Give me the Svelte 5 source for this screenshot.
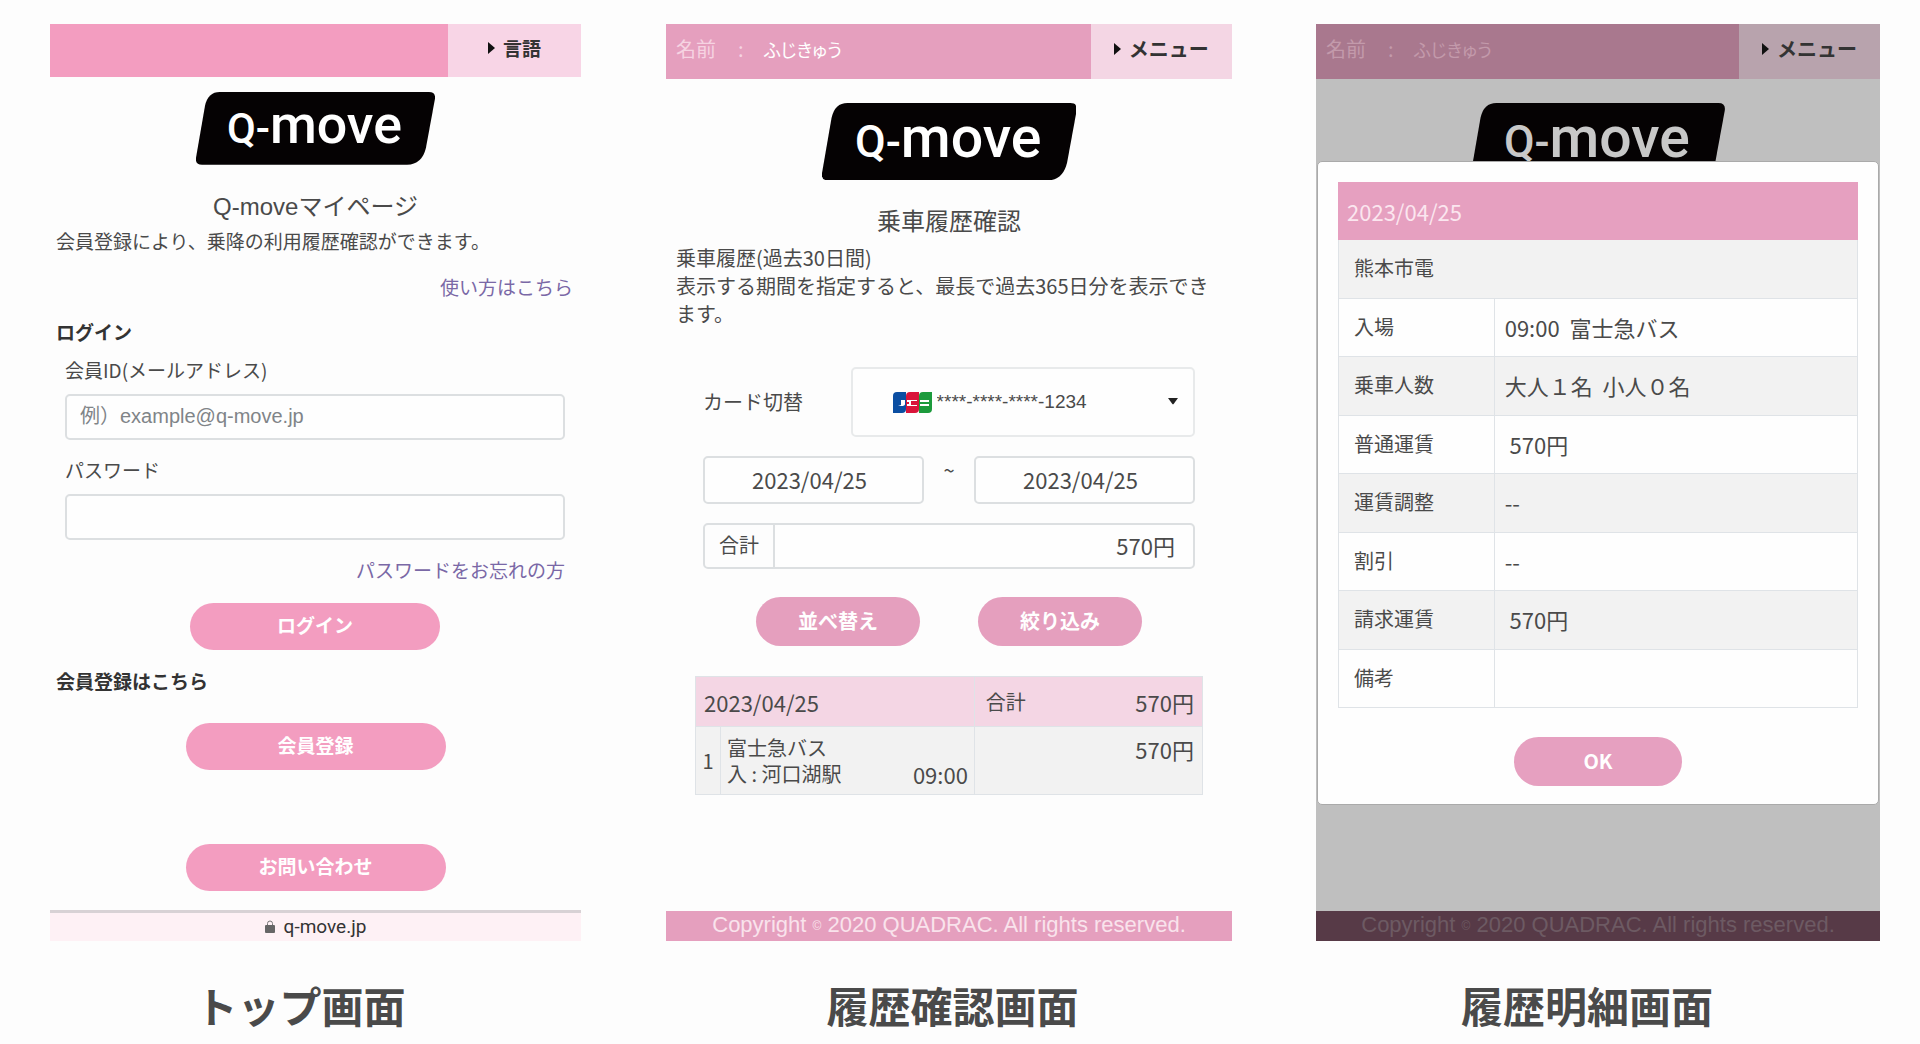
<script>
	let email = $state("");
	let password = $state("");
	let card = $state("1234");
	let from = $state("2023/04/25");
	let to = $state("2023/04/25");

	const userName = "ふじきゅう";

	const rides = [
		{ no: 1, company: "富士急バス", stop: "入 : 河口湖駅", time: "09:00", fare: "570円" },
	];

	const detail = [
		{ label: "入場", value: "09:00  富士急バス" },
		{ label: "乗車人数", value: "大人１名  小人０名" },
		{ label: "普通運賃", value: " 570円" },
		{ label: "運賃調整", value: "--" },
		{ label: "割引", value: "--" },
		{ label: "請求運賃", value: " 570円" },
		{ label: "備考", value: "" },
	];
</script>

{#snippet logo()}
	<svg class="logo" viewBox="0 0 240 73" role="img" aria-label="Q-move">
		<path
			d="M24 0H234Q241 0 240 7L231 56Q227 73 212 73H6Q-1 73 0 66L9 14Q12 0 24 0Z"
			fill="#050203"
		/>
		<text x="119" y="51" text-anchor="middle" class="wordmark">
			<tspan font-size="42">Q-</tspan><tspan font-size="54">move</tspan>
		</text>
	</svg>
{/snippet}

{#snippet menu(text)}
	<button class="menu" type="button">
		<svg width="7" height="12" viewBox="0 0 7 12" aria-hidden="true">
			<path d="M0 0L7 6L0 12Z" fill="#111" />
		</svg>
		{text}
	</button>
{/snippet}

{#snippet userBar()}
	<header class="bar">
		<div class="user">
			<span class="user-label">名前</span>
			<span class="colon">:</span>
			<span class="user-name">{userName}</span>
		</div>
		{@render menu("メニュー")}
	</header>
{/snippet}

{#snippet copyright()}
	<footer class="copyright">
		Copyright <small>©</small> 2020 QUADRAC. All rights reserved.
	</footer>
{/snippet}

<main>
	<!-- login -->
	<figure class="fig-top">
		<section class="screen top">
			<header class="bar">
				<div class="user"></div>
				{@render menu("言語")}
			</header>

			{@render logo()}
			<h1>Q-moveマイページ</h1>
			<p class="lead">会員登録により、乗降の利用履歴確認ができます。</p>
			<a class="howto" href="#howto">使い方はこちら</a>

			<h2>ログイン</h2>
			<form class="login">
				<label for="email">会員ID(メールアドレス)</label>
				<input id="email" type="text" placeholder="例）example@q-move.jp" bind:value={email} />
				<label class="second" for="password">パスワード</label>
				<input id="password" type="password" bind:value={password} />
				<a href="#forgot">パスワードをお忘れの方</a>
				<button class="pill" type="button">ログイン</button>
			</form>

			<h2>会員登録はこちら</h2>
			<button class="pill wide" type="button">会員登録</button>
			<button class="pill wide contact" type="button">お問い合わせ</button>

			<footer class="url">
				<svg width="10" height="13" viewBox="0 0 10 13" aria-hidden="true">
					<path d="M2.500 6V3.500a2.500 2.500 0 0 1 5 0V6" fill="none" stroke="#777" />
					<rect y="5" width="10" height="8" rx="1" fill="#666" />
				</svg>
				q-move.jp
			</footer>
		</section>
		<figcaption>トップ画面</figcaption>
	</figure>

	<!-- ride history -->
	<figure class="fig-history">
		<section class="screen history">
			{@render userBar()}
			{@render logo()}
			<h1>乗車履歴確認</h1>
			<p class="lead">
				乗車履歴(過去30日間)<br />表示する期間を指定すると、最長で過去365日分を表示できます。
			</p>

			<form class="filters">
				<div class="card-row">
					<label for="card">カード切替</label>
					<div class="card-select">
						<svg class="jcb" viewBox="0 0 39 21" aria-hidden="true">
							<path d="M4 0H13V17Q13 21 9 21H0V4Q0 0 4 0Z" fill="#0b4ea2" />
							<path d="M17 0H26V17Q26 21 22 21H13V4Q13 0 17 0Z" fill="#d9143a" />
							<path d="M30 0H39V17Q39 21 35 21H26V4Q26 0 30 0Z" fill="#1c9a3c" />
							<path d="M5 13H8V8H12V12Q12 14 8 14Z" fill="#fff" />
							<path d="M14 8H24V9H18V13H24V14H14V12H16V10H14Z" fill="#fff" />
							<path d="M27 8H36V10H27ZM27 12H36V14H27Z" fill="#fff" />
						</svg>
						<select id="card" bind:value={card}>
							<option value="1234">****-****-****-1234</option>
						</select>
						<svg class="caret" viewBox="0 0 11 7" aria-hidden="true">
							<path d="M0 0H11L6 7H5Z" fill="#222" />
						</svg>
					</div>
				</div>
				<div class="dates">
					<input type="text" aria-label="開始日" bind:value={from} />
					<span>~</span>
					<input type="text" aria-label="終了日" bind:value={to} />
				</div>
				<div class="total">
					<label for="total">合計</label>
					<input id="total" type="text" readonly value="570円" />
				</div>
				<div class="actions">
					<button class="pill" type="button">並べ替え</button>
					<button class="pill" type="button">絞り込み</button>
				</div>
			</form>

			<table class="rides">
				<thead>
					<tr>
						<th class="day" colspan="2">2023/04/25</th>
						<th class="sum">
							<div><span class="sum-label">合計</span><span>570円</span></div>
						</th>
					</tr>
				</thead>
				<tbody>
					{#each rides as ride}
						<tr>
							<td class="no">{ride.no}</td>
							<td class="ride">
								<div>{ride.company}</div>
								<div class="stop"><span>{ride.stop}</span><span class="time">{ride.time}</span></div>
							</td>
							<td class="fare">{ride.fare}</td>
						</tr>
					{/each}
				</tbody>
			</table>
			{@render copyright()}
		</section>
		<figcaption>履歴確認画面</figcaption>
	</figure>

	<!-- ride detail dialog -->
	<figure class="fig-detail">
		<section class="screen detail">
			{@render userBar()}
			{@render logo()}
			<div class="modal" role="dialog" aria-label="履歴明細">
				<table>
					<thead>
						<tr><th colspan="2">2023/04/25</th></tr>
					</thead>
					<tbody>
						<tr><td class="company" colspan="2">熊本市電</td></tr>
						{#each detail as row}
							<tr>
								<td class="key">{row.label}</td>
								<td class="value">{row.value}</td>
							</tr>
						{/each}
					</tbody>
				</table>
				<button class="pill" type="button">OK</button>
			</div>
			{@render copyright()}
		</section>
		<figcaption>履歴明細画面</figcaption>
	</figure>
</main>

<style>
	:global(body) {
		background: #fdfdfd;
	}
	main {
		display: grid;
		grid-template-columns: 561fr 658fr 641fr;
		padding: 24px 40px 0 20px;
		color: #4a4a4a;
		font-family: "Noto Sans CJK JP", sans-serif;
		font-size: 20px;
		line-height: 28px;
	}
	main :global(*) {
		box-sizing: border-box;
	}
	figure {
		display: flex;
		flex-direction: column;
		margin: 0;
	}
	.fig-history {
		padding-left: 85px;
	}
	.fig-detail {
		padding-left: 55px;
	}
	figcaption {
		margin-top: 34px;
		font-size: 42px;
		font-weight: 700;
		line-height: 60px;
		text-align: center;
		color: #4a4a4a;
	}
	.screen {
		--pink: #e59fbe;
		--pale: #f4d6e4;
		--bar: 55px;
		flex: 1;
		display: flex;
		flex-direction: column;
	}
	.top {
		--pink: #f39dc0;
		--pale: #f8d5e6;
		--bar: 53px;
		margin-left: 30px;
		font-size: 19px;
	}
	.history {
		margin-right: 7px;
	}
	.detail {
		--pink: #a9788e;
		--pale: #b8a3ad;
		position: relative;
		margin-left: 22px;
		background: #bfbfbf;
	}
	button,
	input,
	select {
		margin: 0;
		font: inherit;
		color: inherit;
	}

	/* top bar */
	.bar {
		display: flex;
		height: var(--bar);
	}
	.user {
		flex: 1;
		display: flex;
		align-items: center;
		padding: 0 10px 6px;
		background: var(--pink);
	}
	.user-label {
		width: 62px;
		color: #f6d3e2;
	}
	.colon {
		width: 26px;
		color: #f6d3e2;
	}
	.user-name {
		color: #fff;
		font-size: 18px;
		font-feature-settings: "palt";
	}
	.detail .user span {
		color: #c39aab;
	}
	.menu {
		display: flex;
		align-items: center;
		justify-content: center;
		gap: 8px;
		width: 25%;
		padding: 0 0 6px;
		border: 0;
		background: var(--pale);
		color: #333;
		font-weight: 700;
	}

	.logo {
		display: block;
		width: 45%;
		margin: 24px auto 0;
	}
	.top .logo {
		margin-top: 15px;
	}
	.wordmark {
		fill: #fff;
		font-family: Roboto, sans-serif;
		font-weight: 500;
	}
	.detail .wordmark {
		fill: #c8c8c8;
	}
	h1 {
		margin: 26px 0 6px;
		font-family: "Liberation Sans", "Noto Sans CJK JP", sans-serif;
		font-size: 24px;
		font-weight: 400;
		line-height: 32px;
		text-align: center;
	}
	.top h1 {
		margin-bottom: 4px;
	}
	h2 {
		margin: 17px 6px 0;
		font-size: inherit;
		font-weight: 700;
		color: #333;
	}
	.lead {
		margin: 0 10px;
	}
	.top .lead {
		margin: 0 6px;
	}
	a {
		color: #7a68a6;
		text-decoration: none;
	}
	.howto {
		align-self: flex-end;
		margin: 18px 8px 0 0;
	}

	.login {
		display: flex;
		flex-direction: column;
		padding: 10px 16px 0 15px;
	}
	.login input {
		height: 46px;
		margin-top: 10px;
		padding: 0 13px;
		font-family: "Liberation Sans", "Noto Sans CJK JP", sans-serif;
		font-size: 20px;
	}
	.login .second {
		margin-top: 16px;
	}
	.login a {
		align-self: flex-end;
		margin: 16px 0 19px;
	}
	input {
		min-width: 0;
		border: 2px solid #dcdfe1;
		border-radius: 5px;
		background: #fefefe;
	}
	::placeholder {
		color: #808488;
		opacity: 1;
	}
	.pill {
		align-self: center;
		width: 250px;
		height: 49px;
		padding: 0 0 2px;
		border: 0;
		border-radius: 25px;
		background: var(--pink);
		color: #fff;
		font-weight: 700;
	}
	.top .pill {
		height: 47px;
	}
	.pill.wide {
		width: 260px;
		margin-top: 28px;
	}
	.pill.contact {
		margin-top: 74px;
	}
	.url {
		display: flex;
		align-items: center;
		justify-content: center;
		gap: 9px;
		margin-top: 19px;
		border-top: 3px solid #d8d2d5;
		background: #fef1f5;
		color: #333;
		font-family: Roboto, sans-serif;
		font-size: 19px;
	}

	/* history */
	.filters {
		display: flex;
		flex-direction: column;
		gap: 19px;
		margin: 39px 37px 0;
	}
	.card-row {
		display: flex;
		align-items: center;
		justify-content: space-between;
	}
	.card-select {
		position: relative;
		width: 70%;
	}
	select {
		display: block;
		appearance: none;
		width: 100%;
		height: 70px;
		padding: 0 40px 0 84px;
		border: 2px solid #e8eaeb;
		border-radius: 5px;
		background: #fefefe;
		font-family: "Liberation Sans", sans-serif;
		font-size: 19px;
	}
	.jcb {
		position: absolute;
		left: 42px;
		top: 25px;
		width: 39px;
	}
	.caret {
		position: absolute;
		right: 17px;
		top: 31px;
		width: 10px;
	}
	.dates {
		display: grid;
		grid-template-columns: 1fr 50px 1fr;
		text-align: center;
	}
	.dates input {
		height: 48px;
		padding: 0 10px 2px 2px;
		font-size: 22px;
		text-align: center;
	}
	.total {
		display: flex;
		height: 46px;
		border: 2px solid #dcdfe1;
		border-radius: 5px;
	}
	.total label {
		padding: 6px 14px;
		border-right: 2px solid #dcdfe1;
	}
	.total input {
		flex: 1;
		padding: 0 18px 2px;
		border: 0;
		font-size: 22px;
		text-align: right;
	}
	.actions {
		display: flex;
		justify-content: center;
		gap: 58px;
		padding-top: 9px;
	}
	.actions .pill {
		width: 164px;
	}

	table {
		border-collapse: collapse;
	}
	th,
	td {
		border: 1px solid #dfe3e7;
		font-weight: 400;
		text-align: left;
	}
	.rides {
		margin: 30px 29px 0;
		background: #f2f2f2;
	}
	.rides th {
		height: 50px;
		padding: 0 8px;
		background: var(--pale);
		font-size: 22px;
	}
	.rides .sum {
		width: 45%;
		padding-left: 11px;
	}
	.sum div,
	.stop {
		display: flex;
		justify-content: space-between;
	}
	.sum .sum-label {
		font-size: 20px;
	}
	.no {
		width: 25px;
		text-align: center;
	}
	.ride {
		height: 68px;
		padding: 0 6px;
		line-height: 26px;
	}
	.time {
		font-size: 22px;
	}
	.rides .fare {
		padding: 8px 8px 0;
		font-size: 22px;
		text-align: right;
		vertical-align: top;
	}
	.copyright {
		margin-top: auto;
		height: 30px;
		background: var(--pink);
		color: #f9e3ec;
		font-family: "Liberation Sans", sans-serif;
		font-size: 22px;
		text-align: center;
	}
	.copyright small {
		font-size: 12px;
		vertical-align: middle;
	}
	.detail .copyright {
		background: #573a47;
		color: #6d5a63;
	}

	/* detail dialog */
	.modal {
		--pink: #e6a0c0;
		position: absolute;
		top: 137px;
		left: 1px;
		right: 1px;
		display: flex;
		flex-direction: column;
		gap: 29px;
		padding: 20px 20px 18px;
		border: 1px solid #aaa;
		border-radius: 5px;
		background: #fefefe;
	}
	.modal th {
		height: 57px;
		padding: 0 8px;
		border-color: var(--pink);
		background: var(--pink);
		color: #fbe6ef;
		font-size: 22px;
	}
	.modal td {
		height: 58px;
		padding: 0 10px 2px;
		white-space: pre;
	}
	.modal .key,
	.modal .company {
		padding-left: 15px;
	}
	.modal .key {
		width: 30%;
	}
	.modal .value {
		font-size: 22px;
	}
	.modal tbody tr:nth-child(odd) {
		background: #f2f2f2;
	}
	.modal tbody tr:nth-child(odd) td {
		height: 59px;
	}
	.modal .pill {
		width: 168px;
	}
</style>
